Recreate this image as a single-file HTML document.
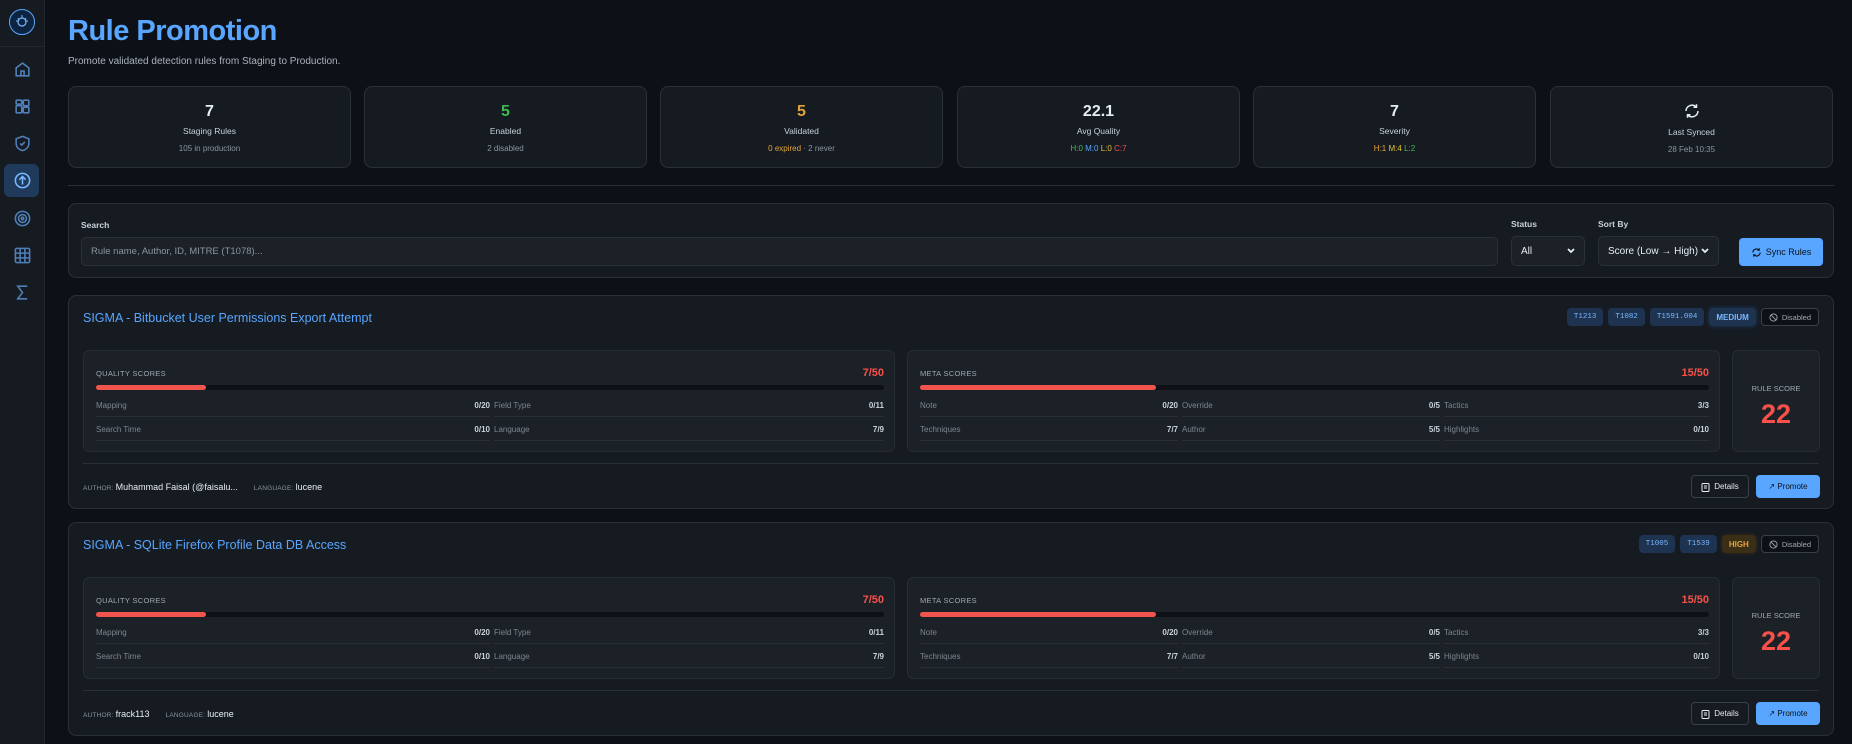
<!DOCTYPE html>
<html><head><meta charset="utf-8"><style>
*{box-sizing:border-box;margin:0;padding:0}
body{width:1852px;height:744px;overflow:hidden;background:#0d1117;font-family:"Liberation Sans",sans-serif;color:#c9d1d9;position:relative}
.sb{position:absolute;left:0;top:0;width:45px;height:744px;background:#161b22;border-right:1px solid #21262d}
.sb .logo{position:absolute;left:9px;top:9px;width:26px;height:26px;border-radius:50%;border:1.5px solid #58a6ff;background:#0d2440}
.sb .div{position:absolute;left:0;top:46px;width:45px;height:1px;background:#21262d}
.sb svg{position:absolute;left:13px;width:19px;height:19px}
.act{position:absolute;left:4px;top:164px;width:35px;height:33px;border-radius:6px;background:#1f3a5a}
h1{position:absolute;left:68px;top:15px;font-size:29px;font-weight:bold;color:#58a6ff;letter-spacing:-0.5px}
.sub{position:absolute;left:68px;top:56px;font-size:10px;color:#aab2bd}
.stat{position:absolute;top:86px;width:283px;height:82px;background:#161b22;border:1px solid #2a3038;border-radius:8px;text-align:center}
.stat .n{margin-top:16px;font-size:16px;font-weight:bold;color:#e6edf3}
.stat .l{margin-top:5px;font-size:8.5px;color:#c9d1d9}
.stat .s{margin-top:8px;font-size:8px;color:#8b949e}
.hr{position:absolute;left:68px;top:185px;width:1766px;height:1px;background:#2a3038}
.filt{position:absolute;left:68px;top:203px;width:1766px;height:75px;background:#161b22;border:1px solid #2a3038;border-radius:8px}
.lab{position:absolute;font-size:8.5px;font-weight:bold;color:#c9d1d9}
.inp{position:absolute;background:#1c2128;border:1px solid #2a3038;border-radius:5px;font-size:9.5px;color:#8b949e;padding-left:9px;display:flex;align-items:center}
.sel{color:#e6edf3;font-size:10px}
.chev{position:absolute;right:8px;top:9px}
.btnb{position:absolute;background:#58a6ff;border-radius:4px;color:#0d1117;font-size:9px;display:flex;align-items:center;justify-content:center;gap:4px}
.card{position:absolute;left:68px;width:1766px;height:214px;background:#161b22;border:1px solid #2a3038;border-radius:8px}
.ct{position:absolute;left:14px;top:15px;font-size:12.5px;color:#58a6ff}
.tags{position:absolute;right:14px;top:12px;display:flex;gap:5px}
.tag{height:18px;padding:0 7px;border-radius:4px;background:#1d3350;color:#79b8ff;font-family:"Liberation Mono",monospace;font-size:7.5px;display:flex;align-items:center}
.tag.sev{font-family:"Liberation Sans",sans-serif;font-weight:bold;font-size:8px;box-shadow:0 0 4px #1d3a60}
.tag.hi{background:#3a2e17;color:#e3a33a;box-shadow:0 0 4px #3a2e17}
.tag.dis{background:#0d1117;border:1px solid #3a4048;color:#a0a8b0;font-family:"Liberation Sans",sans-serif;gap:4px}
.box{position:absolute;top:54px;height:102px;background:#1c2128;border:1px solid #262c34;border-radius:6px}
.bh{position:absolute;left:12px;top:18px;font-size:7.5px;color:#a0a8b0;letter-spacing:.3px}
.bv{position:absolute;right:10px;top:16px;font-size:11px;font-weight:bold;color:#f85149}
.bar{position:absolute;left:12px;right:10px;top:34px;height:5px;border-radius:3px;background:#0d1117}
.bar i{position:absolute;left:0;top:0;height:5px;border-radius:3px;background:#f0544c}
.row{position:absolute;height:22px;border-bottom:1px solid #2a3038;font-size:8px;color:#7d858f;display:flex;justify-content:space-between;align-items:center}
.row b{color:#c9d1d9;font-weight:bold;font-size:8px}
.rs{position:absolute;left:1663px;top:54px;width:88px;height:102px;background:#1c2128;border:1px solid #262c34;border-radius:6px;text-align:center}
.rs .t{margin-top:33px;font-size:7.5px;color:#a0a8b0}
.rs .v{margin-top:6px;font-size:27px;font-weight:bold;color:#f85149}
.sep{position:absolute;left:14px;right:14px;top:167px;height:1px;background:#2a3038}
.foot{position:absolute;left:14px;top:186px;font-size:6.5px;color:#8b949e;letter-spacing:.2px}
.foot b{font-size:9px;color:#e6edf3;font-weight:normal;letter-spacing:0;margin-right:16px}
.bd{position:absolute;left:1622px;top:179px;width:58px;height:23px;border:1px solid #3a4048;border-radius:4px;background:#161b22;font-size:8px;color:#e6edf3;display:flex;align-items:center;justify-content:center;gap:4px}
.bp{position:absolute;left:1687px;top:179px;width:64px;height:23px;border-radius:4px;background:#58a6ff;font-size:8px;color:#0d1117;display:flex;align-items:center;justify-content:center;gap:4px}
</style></head><body>
<div class="sb">
<div class="logo"><svg style="left:5px;top:4px;width:14px;height:16px" viewBox="0 0 14 16"><circle cx="7" cy="8" r="4" fill="none" stroke="#79b8ff" stroke-width="1.2"/><path d="M3 4l1 2M11 4l-1 2M7 1v3M1 7h2M11 7h2" stroke="#79b8ff" stroke-width="1"/></svg></div>
<div class="div"></div>
<div class="act"></div>
<svg style="top:60px" viewBox="0 0 24 24" fill="none" stroke="#4f7fb8" stroke-width="2"><path d="M4 10l8-6 8 6v10H4z"/><path d="M10 20v-6h4v6"/></svg>
<svg style="top:97px" viewBox="0 0 24 24" fill="none" stroke="#4f7fb8" stroke-width="2"><rect x="4" y="4" width="7" height="5" rx="1"/><rect x="13" y="4" width="7" height="7" rx="1"/><rect x="4" y="11" width="7" height="9" rx="1"/><rect x="13" y="13" width="7" height="7" rx="1"/></svg>
<svg style="top:134px" viewBox="0 0 24 24" fill="none" stroke="#4f7fb8" stroke-width="2"><path d="M12 3l8 3v6c0 5-4 8-8 9-4-1-8-4-8-9V6z"/><path d="M9 12l2 2 4-4"/></svg>
<svg style="top:171px" viewBox="0 0 24 24" fill="none" stroke="#79b8ff" stroke-width="2"><circle cx="12" cy="12" r="9"/><path d="M12 17V8M8 11l4-4 4 4"/></svg>
<svg style="top:209px" viewBox="0 0 24 24" fill="none" stroke="#4f7fb8" stroke-width="2"><circle cx="12" cy="12" r="9"/><circle cx="12" cy="12" r="5"/><circle cx="12" cy="12" r="1.5"/></svg>
<svg style="top:246px" viewBox="0 0 24 24" fill="none" stroke="#4f7fb8" stroke-width="2"><rect x="3" y="3" width="18" height="18" rx="2"/><path d="M3 9h18M3 15h18M9 3v18M15 3v18"/></svg>
<svg style="top:283px" viewBox="0 0 24 24" fill="none" stroke="#4f7fb8" stroke-width="2"><path d="M18 4H6l6 8-6 8h12"/></svg>
</div>

<h1>Rule Promotion</h1>
<div class="sub">Promote validated detection rules from Staging to Production.</div>

<div class="stat" style="left:68px"><div class="n">7</div><div class="l">Staging Rules</div><div class="s">105 in production</div></div>
<div class="stat" style="left:364px"><div class="n" style="color:#3fb950">5</div><div class="l">Enabled</div><div class="s">2 disabled</div></div>
<div class="stat" style="left:660px"><div class="n" style="color:#e3a33a">5</div><div class="l">Validated</div><div class="s"><span style="color:#e3a33a">0 expired</span> · 2 never</div></div>
<div class="stat" style="left:957px"><div class="n">22.1</div><div class="l">Avg Quality</div><div class="s"><span style="color:#3fb950">H:0</span> <span style="color:#58a6ff">M:0</span> <span style="color:#e3c03a">L:0</span> <span style="color:#f85149">C:7</span></div></div>
<div class="stat" style="left:1253px"><div class="n">7</div><div class="l">Severity</div><div class="s"><span style="color:#e3a33a">H:1</span> <span style="color:#e3c03a">M:4</span> <span style="color:#3fb950">L:2</span></div></div>
<div class="stat" style="left:1550px"><svg style="margin-top:15px" width="18" height="18" viewBox="0 0 24 24" fill="none" stroke="#e6edf3" stroke-width="2"><path d="M20 12a8 8 0 0 1-14 5M4 12a8 8 0 0 1 14-5"/><path d="M18 3v4h-4M6 21v-4h4"/></svg><div class="l" style="margin-top:2px">Last Synced</div><div class="s">28 Feb 10:35</div></div>

<div class="hr"></div>

<div class="filt">
<div class="lab" style="left:12px;top:16px">Search</div>
<div class="inp" style="left:12px;top:33px;width:1417px;height:29px">Rule name, Author, ID, MITRE (T1078)...</div>
<div class="lab" style="left:1442px;top:15px">Status</div>
<div class="inp sel" style="left:1442px;top:32px;width:74px;height:30px">All<svg class="chev" width="10" height="10" viewBox="0 0 10 10"><path d="M2 3l3 3 3-3" stroke="#e6edf3" stroke-width="1.8" fill="none"/></svg></div>
<div class="lab" style="left:1529px;top:15px">Sort By</div>
<div class="inp sel" style="left:1529px;top:32px;width:121px;height:30px">Score (Low → High)<svg class="chev" width="10" height="10" viewBox="0 0 10 10"><path d="M2 3l3 3 3-3" stroke="#e6edf3" stroke-width="1.8" fill="none"/></svg></div>
<div class="btnb" style="left:1670px;top:34px;width:84px;height:28px"><svg width="11" height="11" viewBox="0 0 24 24" fill="none" stroke="#0d1117" stroke-width="2.5"><path d="M20 12a8 8 0 0 1-14 5M4 12a8 8 0 0 1 14-5"/><path d="M18 3v4h-4M6 21v-4h4"/></svg>Sync Rules</div>
</div>

<!-- card 1 -->
<div class="card" style="top:295px">
<div class="ct">SIGMA - Bitbucket User Permissions Export Attempt</div>
<div class="tags"><div class="tag">T1213</div><div class="tag">T1082</div><div class="tag">T1591.004</div><div class="tag sev">MEDIUM</div><div class="tag dis"><svg width="9" height="9" viewBox="0 0 10 10" fill="none" stroke="#a0a8b0"><circle cx="5" cy="5" r="4"/><path d="M2 2l6 6"/></svg>Disabled</div></div>
<div class="box" style="left:14px;width:812px"><div class="bh">QUALITY SCORES</div><div class="bv">7/50</div><div class="bar"><i style="width:110px"></i></div>
<div class="row" style="left:12px;width:394px;top:44px">Mapping<b>0/20</b></div><div class="row" style="left:410px;width:390px;top:44px">Field Type<b>0/11</b></div>
<div class="row" style="left:12px;width:394px;top:68px">Search Time<b>0/10</b></div><div class="row" style="left:410px;width:390px;top:68px">Language<b>7/9</b></div></div>
<div class="box" style="left:838px;width:813px"><div class="bh">META SCORES</div><div class="bv">15/50</div><div class="bar"><i style="width:236px"></i></div>
<div class="row" style="left:12px;width:258px;top:44px">Note<b>0/20</b></div><div class="row" style="left:274px;width:258px;top:44px">Override<b>0/5</b></div><div class="row" style="left:536px;width:265px;top:44px">Tactics<b>3/3</b></div>
<div class="row" style="left:12px;width:258px;top:68px">Techniques<b>7/7</b></div><div class="row" style="left:274px;width:258px;top:68px">Author<b>5/5</b></div><div class="row" style="left:536px;width:265px;top:68px">Highlights<b>0/10</b></div></div>
<div class="rs"><div class="t">RULE SCORE</div><div class="v">22</div></div>
<div class="sep"></div>
<div class="foot">AUTHOR: <b>Muhammad Faisal (@faisalu...</b>LANGUAGE: <b>lucene</b></div>
<div class="bd"><svg width="9" height="10" viewBox="0 0 9 10" fill="none" stroke="#e6edf3"><rect x="1" y="1.5" width="7" height="8" rx="1"/><path d="M3 4h3M3 6h3"/></svg>Details</div>
<div class="bp">↗ Promote</div>
</div>

<!-- card 2 -->
<div class="card" style="top:522px">
<div class="ct">SIGMA - SQLite Firefox Profile Data DB Access</div>
<div class="tags"><div class="tag">T1005</div><div class="tag">T1539</div><div class="tag sev hi">HIGH</div><div class="tag dis"><svg width="9" height="9" viewBox="0 0 10 10" fill="none" stroke="#a0a8b0"><circle cx="5" cy="5" r="4"/><path d="M2 2l6 6"/></svg>Disabled</div></div>
<div class="box" style="left:14px;width:812px"><div class="bh">QUALITY SCORES</div><div class="bv">7/50</div><div class="bar"><i style="width:110px"></i></div>
<div class="row" style="left:12px;width:394px;top:44px">Mapping<b>0/20</b></div><div class="row" style="left:410px;width:390px;top:44px">Field Type<b>0/11</b></div>
<div class="row" style="left:12px;width:394px;top:68px">Search Time<b>0/10</b></div><div class="row" style="left:410px;width:390px;top:68px">Language<b>7/9</b></div></div>
<div class="box" style="left:838px;width:813px"><div class="bh">META SCORES</div><div class="bv">15/50</div><div class="bar"><i style="width:236px"></i></div>
<div class="row" style="left:12px;width:258px;top:44px">Note<b>0/20</b></div><div class="row" style="left:274px;width:258px;top:44px">Override<b>0/5</b></div><div class="row" style="left:536px;width:265px;top:44px">Tactics<b>3/3</b></div>
<div class="row" style="left:12px;width:258px;top:68px">Techniques<b>7/7</b></div><div class="row" style="left:274px;width:258px;top:68px">Author<b>5/5</b></div><div class="row" style="left:536px;width:265px;top:68px">Highlights<b>0/10</b></div></div>
<div class="rs"><div class="t">RULE SCORE</div><div class="v">22</div></div>
<div class="sep"></div>
<div class="foot">AUTHOR: <b>frack113</b>LANGUAGE: <b>lucene</b></div>
<div class="bd"><svg width="9" height="10" viewBox="0 0 9 10" fill="none" stroke="#e6edf3"><rect x="1" y="1.5" width="7" height="8" rx="1"/><path d="M3 4h3M3 6h3"/></svg>Details</div>
<div class="bp">↗ Promote</div>
</div>
</body></html>
